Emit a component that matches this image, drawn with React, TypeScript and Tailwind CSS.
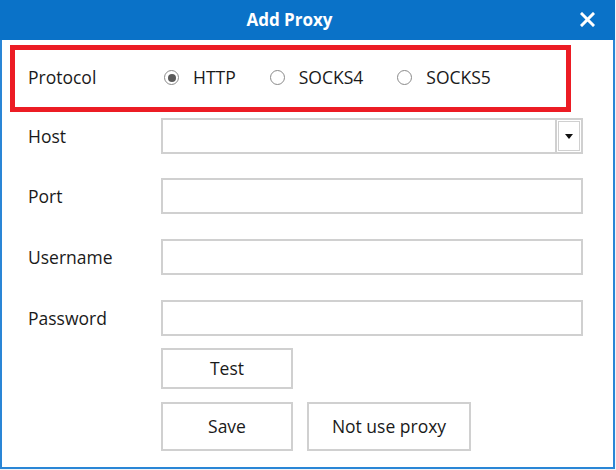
import { useState } from 'react';

const protocols = ['HTTP', 'SOCKS4', 'SOCKS5'];

function Radio({ label, checked, onClick }: { label: string; checked: boolean; onClick: () => void }) {
    return (
        <button onClick={onClick} className="flex items-center gap-[14px] text-[17.5px] text-[#1a1a1a]">
            <span className="w-[15px] h-[15px] rounded-full border border-[#8a8a8a] bg-white flex items-center justify-center">
                {checked && <span className="w-[8px] h-[8px] rounded-full bg-[#5a5a5a]" />}
            </span>
            {label}
        </button>
    );
}

function Field({ label, className, children }: { label: string; className?: string; children: React.ReactNode }) {
    return (
        <div className={`flex items-center h-[36px] ${className ?? ''}`}>
            <label className="w-[133px] text-[17.5px] text-[#1a1a1a]">{label}</label>
            {children}
        </div>
    );
}

export default function App() {
    const [protocol, setProtocol] = useState('HTTP');
    const inputCls = 'w-[422px] h-[36px] border-2 border-[#d0d0d0] bg-white px-2 text-[16px] outline-none';

    return (
        <div className="w-[616px] h-[470px] bg-[#f0f4f8]" style={{ fontFamily: '"Open Sans", "Noto Sans", sans-serif' }}>
            <div className="w-[615px] h-[469px] border-x-2 border-b-2 border-[#2a86d6] bg-white flex flex-col">
                <div className="h-[40px] -mx-[2px] bg-[#0a72c8] flex items-center justify-center relative pr-[36px]">
                    <span className="text-white font-bold text-[17px]">Add Proxy</span>
                    <button className="absolute right-[20px] top-[12px] text-white">
                        <svg width="15" height="15" viewBox="0 0 15 15">
                            <path d="M2 2 L13 13 M13 2 L2 13" stroke="white" strokeWidth="3" strokeLinecap="square" />
                        </svg>
                    </button>
                </div>

                <div className="mt-[5px] ml-[8px] w-[561px] h-[67px] border-[5px] border-[#ec1c24] flex items-center pl-[13px]">
                    <span className="w-[136px] text-[17.5px] text-[#1a1a1a] -mt-[2px]">Protocol</span>
                    <div className="flex items-center gap-[34px] -mt-[2px]">
                        {protocols.map(p => (
                            <Radio key={p} label={p} checked={protocol === p} onClick={() => setProtocol(p)} />
                        ))}
                    </div>
                </div>

                <div className="mt-[6px] pl-[26px] flex flex-col">
                    <Field label="Host">
                        <div className="w-[422px] h-[36px] border-2 border-[#d0d0d0] bg-white flex">
                            <input className="flex-1 px-2 text-[16px] outline-none" />
                            <div className="w-[26px] border-l-2 border-[#d0d0d0] p-[1px]">
                                <div className="w-full h-full border border-[#d0d0d0] flex items-center justify-center">
                                    <svg width="8" height="5" viewBox="0 0 8 5">
                                        <path d="M0 0 H8 L4 5 Z" fill="#111" />
                                    </svg>
                                </div>
                            </div>
                        </div>
                    </Field>
                    <Field label="Port" className="mt-[24px]">
                        <input className={inputCls} />
                    </Field>
                    <Field label="Username" className="mt-[25px]">
                        <input className={inputCls} />
                    </Field>
                    <Field label="Password" className="mt-[25px]">
                        <input type="password" className={inputCls} />
                    </Field>
                </div>

                <div className="mt-[12px] ml-[159px] flex flex-col gap-[13px]">
                    <button className="w-[132px] h-[41px] border-2 border-[#d0d0d0] bg-white text-[17.5px] text-[#1a1a1a]">Test</button>
                    <div className="flex gap-[14px]">
                        <button className="w-[132px] h-[49px] border-2 border-[#d0d0d0] bg-white text-[17.5px] text-[#1a1a1a]">Save</button>
                        <button className="w-[164px] h-[49px] border-2 border-[#d0d0d0] bg-white text-[17.5px] text-[#1a1a1a]">Not use proxy</button>
                    </div>
                </div>
            </div>
        </div>
    );
}
